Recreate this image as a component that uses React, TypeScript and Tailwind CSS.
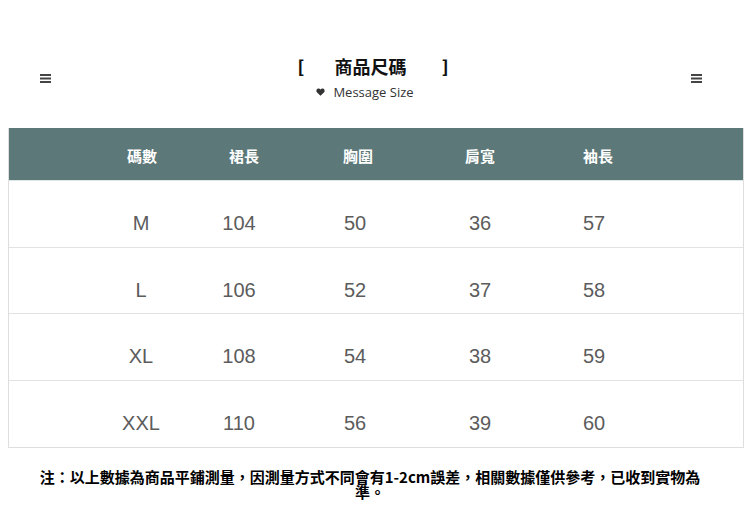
const rows = [
  ['M', '104', '50', '36', '57'],
  ['L', '106', '52', '37', '58'],
  ['XL', '108', '54', '38', '59'],
  ['XXL', '110', '56', '39', '60'],
];

const headers = ['碼數', '裙長', '胸圍', '肩寬', '袖長'];
const headerWidths = ['w-[100px]', 'w-[104px]', 'w-[124px]', 'w-[120px]', 'w-[116px]'];
const cellWidths = ['w-[100px]', 'w-[96px]', 'w-[136px]', 'w-[114px]', 'w-[114px]'];

function MenuIcon() {
  return (
    <svg width="11" height="9" viewBox="0 0 11 9" className="text-[#444]">
      <rect x="0" y="0" width="11" height="2" fill="currentColor" />
      <rect x="0" y="3.5" width="11" height="2" fill="currentColor" />
      <rect x="0" y="7" width="11" height="2" fill="currentColor" />
    </svg>
  );
}

function Heart() {
  return (
    <svg width="9" height="8" viewBox="0 0 24 22" className="text-[#333]">
      <path
        d="M12 21.5 2.6 12.4C-.4 9.4.1 4.3 3.7 2.2 6.6.5 10 1.5 12 4c2-2.5 5.4-3.5 8.3-1.8 3.6 2.1 4.1 7.2 1.1 10.2Z"
        fill="currentColor"
      />
    </svg>
  );
}

export default function App() {
  return (
    <main
      className="w-[750px] h-[505px] bg-white overflow-hidden"
      style={{ fontFamily: '"Liberation Sans", "Noto Sans CJK TC", sans-serif' }}
    >
      <div className="h-[128px] flex items-start">
        <div className="w-[90px] pt-[74px] pl-[40px]">
          <MenuIcon />
        </div>
        <div className="flex-1 flex flex-col items-center pt-[56px] pr-[4px]">
          <div className="flex items-center h-[20px] font-bold text-[#111]" style={{ fontFamily: '"Noto Sans CJK TC", sans-serif' }}>
            <span className="text-[17px] font-black w-[37px] text-left leading-[20px]">[</span>
            <span className="text-[18px] leading-[20px]">商品尺碼</span>
            <span className="text-[17px] font-black w-[42px] text-right leading-[20px]">]</span>
          </div>
          <div className="flex items-center gap-[8px] mt-[8px] mr-[16px]">
            <Heart />
            <span
              className="text-[13px] text-[#333] leading-[16px]"
              style={{ fontFamily: '"Liberation Sans Narrow", "Open Sans", sans-serif' }}
            >
              Message Size
            </span>
          </div>
        </div>
        <div className="w-[90px] pt-[74px] pl-[31px]">
          <MenuIcon />
        </div>
      </div>

      <div className="mx-[8px] w-[736px] border-l border-r border-b border-[#dedede]">
        <div className="h-[53px] bg-[#5c7878] flex items-center pl-[83px] pt-[5px] border-b border-[#dce8e8]">
          {headers.map((h, i) => (
            <div
              key={h}
              className={`${headerWidths[i]} text-center text-white font-bold text-[15px]`}
              style={{ fontFamily: '"Noto Sans CJK TC", sans-serif' }}
            >
              {h}
            </div>
          ))}
        </div>
        {rows.map((r, ri) => (
          <div
            key={r[0]}
            className={`h-[66.5px] flex pl-[82px] pt-[30px] ${ri < rows.length - 1 ? 'border-b border-[#e2e2e2]' : ''}`}
          >
            {r.map((c, i) => (
              <div key={i} className={`${cellWidths[i]} text-center text-[20px] leading-[24px] text-[#5c5c5c]`}>
                {c}
              </div>
            ))}
          </div>
        ))}
      </div>

      <p
        className="ml-[34px] w-[672px] mt-[21px] text-center text-[15px] leading-[15px] font-bold text-black"
        style={{ fontFamily: '"Noto Sans CJK TC", sans-serif' }}
      >
        注：以上數據為商品平鋪測量，因測量方式不同會有1-2cm誤差，相關數據僅供參考，已收到實物為準。
      </p>
    </main>
  );
}
